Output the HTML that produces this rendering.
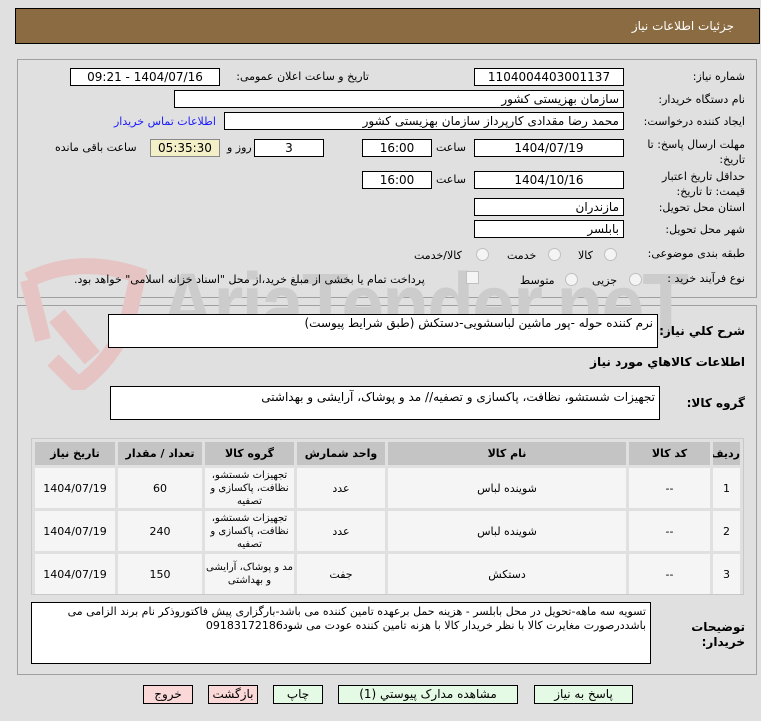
<!DOCTYPE html>
<html><head><meta charset="utf-8"><style>
body{margin:0;width:761px;height:721px;background:#e0e0e0;position:relative;overflow:hidden;font-family:"DejaVu Sans","Liberation Sans",sans-serif;font-size:11px;color:#000}
.a{position:absolute}
.box{position:absolute;background:#fff;border:1px solid #000;box-sizing:border-box;height:18px;line-height:16px;direction:rtl;padding:0 4px;white-space:nowrap;overflow:hidden;font-size:12px}
.c{text-align:center}
.lbl{position:absolute;direction:rtl;white-space:nowrap;text-align:right}
.panel{position:absolute;left:17px;width:740px;border:1px solid #a0a0a0;box-sizing:border-box}
table{border-collapse:separate;border-spacing:3px;direction:rtl;background:#e0e0e0;table-layout:fixed}
td,th{background:#f5f5f5;text-align:center;font-size:11px;padding:0;overflow:hidden}
th{background:#c4c4c4;height:23px}
.btn{position:absolute;top:685px;height:19px;border:1px solid #000;box-sizing:border-box;text-align:center;line-height:17px;font-size:12px;direction:rtl}
.radio{position:absolute;width:11px;height:11px;border:1px solid #c0c0c0;border-radius:50%;background:#f4f4f4}
</style></head><body>
<div class="a" style="left:15px;top:8px;width:745px;height:36px;background:#8b6b42;border:1px solid #000;box-sizing:border-box"></div>
<div class="lbl" style="right:27px;top:19px;color:#fff;font-size:12px">جزئیات اطلاعات نیاز</div>

<div class="panel" style="top:59px;height:239px"></div>
<div class="panel" style="top:305px;height:370px"></div>

<!-- watermark -->
<svg class="a" style="left:18px;top:250px" width="130" height="140" viewBox="0 0 130 140"><path d="M10 30 Q60 5 120 25 L110 70 Q95 110 60 135 L35 110 M10 30 L25 90" fill="none" stroke="#e6c4c4" stroke-width="16"/><rect x="45" y="60" width="20" height="55" fill="#e6c4c4" transform="rotate(-40 55 85)"/></svg>
<div class="a" style="left:160px;top:255px;font-size:90px;font-weight:bold;color:#cccccc;font-family:'Liberation Sans',sans-serif;letter-spacing:-2px;transform:scaleX(0.85);transform-origin:left">AriaTender.neT</div>

<div class="lbl" style="right:16px;top:70px">شماره نیاز:</div>
<div class="box c" style="left:474px;top:68px;width:150px">1104004403001137</div>
<div class="lbl" style="right:392px;top:70px">تاریخ و ساعت اعلان عمومی:</div>
<div class="box c" style="left:70px;top:68px;width:150px">1404/07/16 - 09:21</div>

<div class="lbl" style="right:16px;top:93px">نام دستگاه خریدار:</div>
<div class="box" style="left:174px;top:90px;width:450px">سازمان بهزیستی کشور</div>

<div class="lbl" style="right:16px;top:115px">ایجاد کننده درخواست:</div>
<div class="box" style="left:224px;top:112px;width:400px">محمد رضا  مقدادی کارپرداز سازمان بهزیستی کشور</div>
<div class="lbl" style="left:114px;top:115px;color:#1a1aff">اطلاعات تماس خریدار</div>

<div class="lbl" style="right:16px;top:137px;line-height:15px">مهلت ارسال پاسخ: تا<br>تاریخ:</div>
<div class="box c" style="left:474px;top:139px;width:150px">1404/07/19</div>
<div class="lbl" style="left:436px;top:141px">ساعت</div>
<div class="box c" style="left:362px;top:139px;width:70px">16:00</div>
<div class="box c" style="left:254px;top:139px;width:70px">3</div>
<div class="lbl" style="left:227px;top:141px">روز و</div>
<div class="box c" style="left:150px;top:139px;width:70px;background:#f3f0c8;border-color:#888">05:35:30</div>
<div class="lbl" style="left:55px;top:141px">ساعت باقی مانده</div>

<div class="lbl" style="right:16px;top:169px;line-height:15px">حداقل تاریخ اعتبار<br>قیمت: تا تاریخ:</div>
<div class="box c" style="left:474px;top:171px;width:150px">1404/10/16</div>
<div class="lbl" style="left:436px;top:173px">ساعت</div>
<div class="box c" style="left:362px;top:171px;width:70px">16:00</div>

<div class="lbl" style="right:16px;top:201px">استان محل تحویل:</div>
<div class="box" style="left:474px;top:198px;width:150px">مازندران</div>
<div class="lbl" style="right:16px;top:223px">شهر محل تحویل:</div>
<div class="box" style="left:474px;top:220px;width:150px">بابلسر</div>

<div class="lbl" style="right:16px;top:247px">طبقه بندی موضوعی:</div>
<div class="radio" style="left:604px;top:248px"></div><div class="lbl" style="left:578px;top:249px">کالا</div>
<div class="radio" style="left:548px;top:248px"></div><div class="lbl" style="left:507px;top:249px">خدمت</div>
<div class="radio" style="left:476px;top:248px"></div><div class="lbl" style="left:414px;top:249px">کالا/خدمت</div>

<div class="lbl" style="right:16px;top:272px">نوع فرآیند خرید :</div>
<div class="radio" style="left:629px;top:273px"></div><div class="lbl" style="left:592px;top:274px">جزیی</div>
<div class="radio" style="left:565px;top:273px"></div><div class="lbl" style="left:520px;top:274px">متوسط</div>
<div class="a" style="left:466px;top:271px;width:11px;height:11px;border:1px solid #c0c0c0;background:#f4f4f4"></div>
<div class="lbl" style="left:74px;top:273px">پرداخت تمام یا بخشی از مبلغ خرید،از محل "اسناد خزانه اسلامی" خواهد بود.</div>

<div class="lbl" style="right:16px;top:324px;font-weight:bold;font-size:12px">شرح کلي نياز:</div>
<div class="box" style="left:108px;top:314px;width:550px;height:34px;background:#fff">نرم کننده حوله -پور ماشین لباسشویی-دستکش (طبق شرایط پیوست)</div>
<div class="lbl" style="right:16px;top:355px;font-weight:bold;font-size:12px">اطلاعات کالاهاي مورد نياز</div>
<div class="lbl" style="right:16px;top:396px;font-weight:bold;font-size:12px">گروه کالا:</div>
<div class="box" style="left:110px;top:386px;width:550px;height:34px;line-height:20px">تجهیزات شستشو، نظافت، پاکسازی و تصفیه// مد و پوشاک، آرایشی و بهداشتی</div>

<div class="a" style="left:31px;top:438px;width:713px;height:157px;border:1px solid #c8c8c8;box-sizing:border-box;overflow:hidden">
<table style="width:711px;margin:0">
<colgroup><col style="width:27px"><col style="width:81px"><col style="width:238px"><col style="width:88px"><col style="width:89px"><col style="width:84px"><col></colgroup>
<tr><th>ردیف</th><th>کد کالا</th><th>نام کالا</th><th>واحد شمارش</th><th>گروه کالا</th><th>تعداد / مقدار</th><th>تاریخ نیاز</th></tr>
<tr style="height:40px"><td>1</td><td>--</td><td>شوینده لباس</td><td>عدد</td><td style="line-height:13px;font-size:10px;direction:rtl">تجهیزات شستشو، نظافت، پاکسازی و تصفیه</td><td>60</td><td>1404/07/19</td></tr>
<tr style="height:40px"><td>2</td><td>--</td><td>شوینده لباس</td><td>عدد</td><td style="line-height:13px;font-size:10px;direction:rtl">تجهیزات شستشو، نظافت، پاکسازی و تصفیه</td><td>240</td><td>1404/07/19</td></tr>
<tr style="height:40px"><td>3</td><td>--</td><td>دستکش</td><td>جفت</td><td style="line-height:13px;font-size:10px;direction:rtl">مد و پوشاک، آرایشی و بهداشتی</td><td>150</td><td>1404/07/19</td></tr>
</table></div>

<div class="lbl" style="right:16px;top:620px;font-weight:bold;line-height:15px;font-size:12px">توضیحات<br>خریدار:</div>
<div class="box" style="left:31px;top:602px;width:620px;height:62px;white-space:normal;line-height:14px;padding-top:2px;font-size:11px">تسویه سه ماهه-تحویل در محل بابلسر - هزینه حمل برعهده تامین کننده می باشد-بارگزاری پیش فاکتوروذکر نام برند الزامی می باشددرصورت مغایرت کالا با نظر خریدار کالا با هزنه تامین کننده عودت می شود09183172186</div>

<div class="btn" style="left:534px;width:99px;background:#e4fae4">پاسخ به نیاز</div>
<div class="btn" style="left:338px;width:180px;background:#e4fae4">مشاهده مدارک پیوستي (1)</div>
<div class="btn" style="left:273px;width:50px;background:#e4fae4">چاپ</div>
<div class="btn" style="left:208px;width:50px;background:#fbd8d8">بازگشت</div>
<div class="btn" style="left:143px;width:50px;background:#fbd8d8">خروج</div>
</body></html>
